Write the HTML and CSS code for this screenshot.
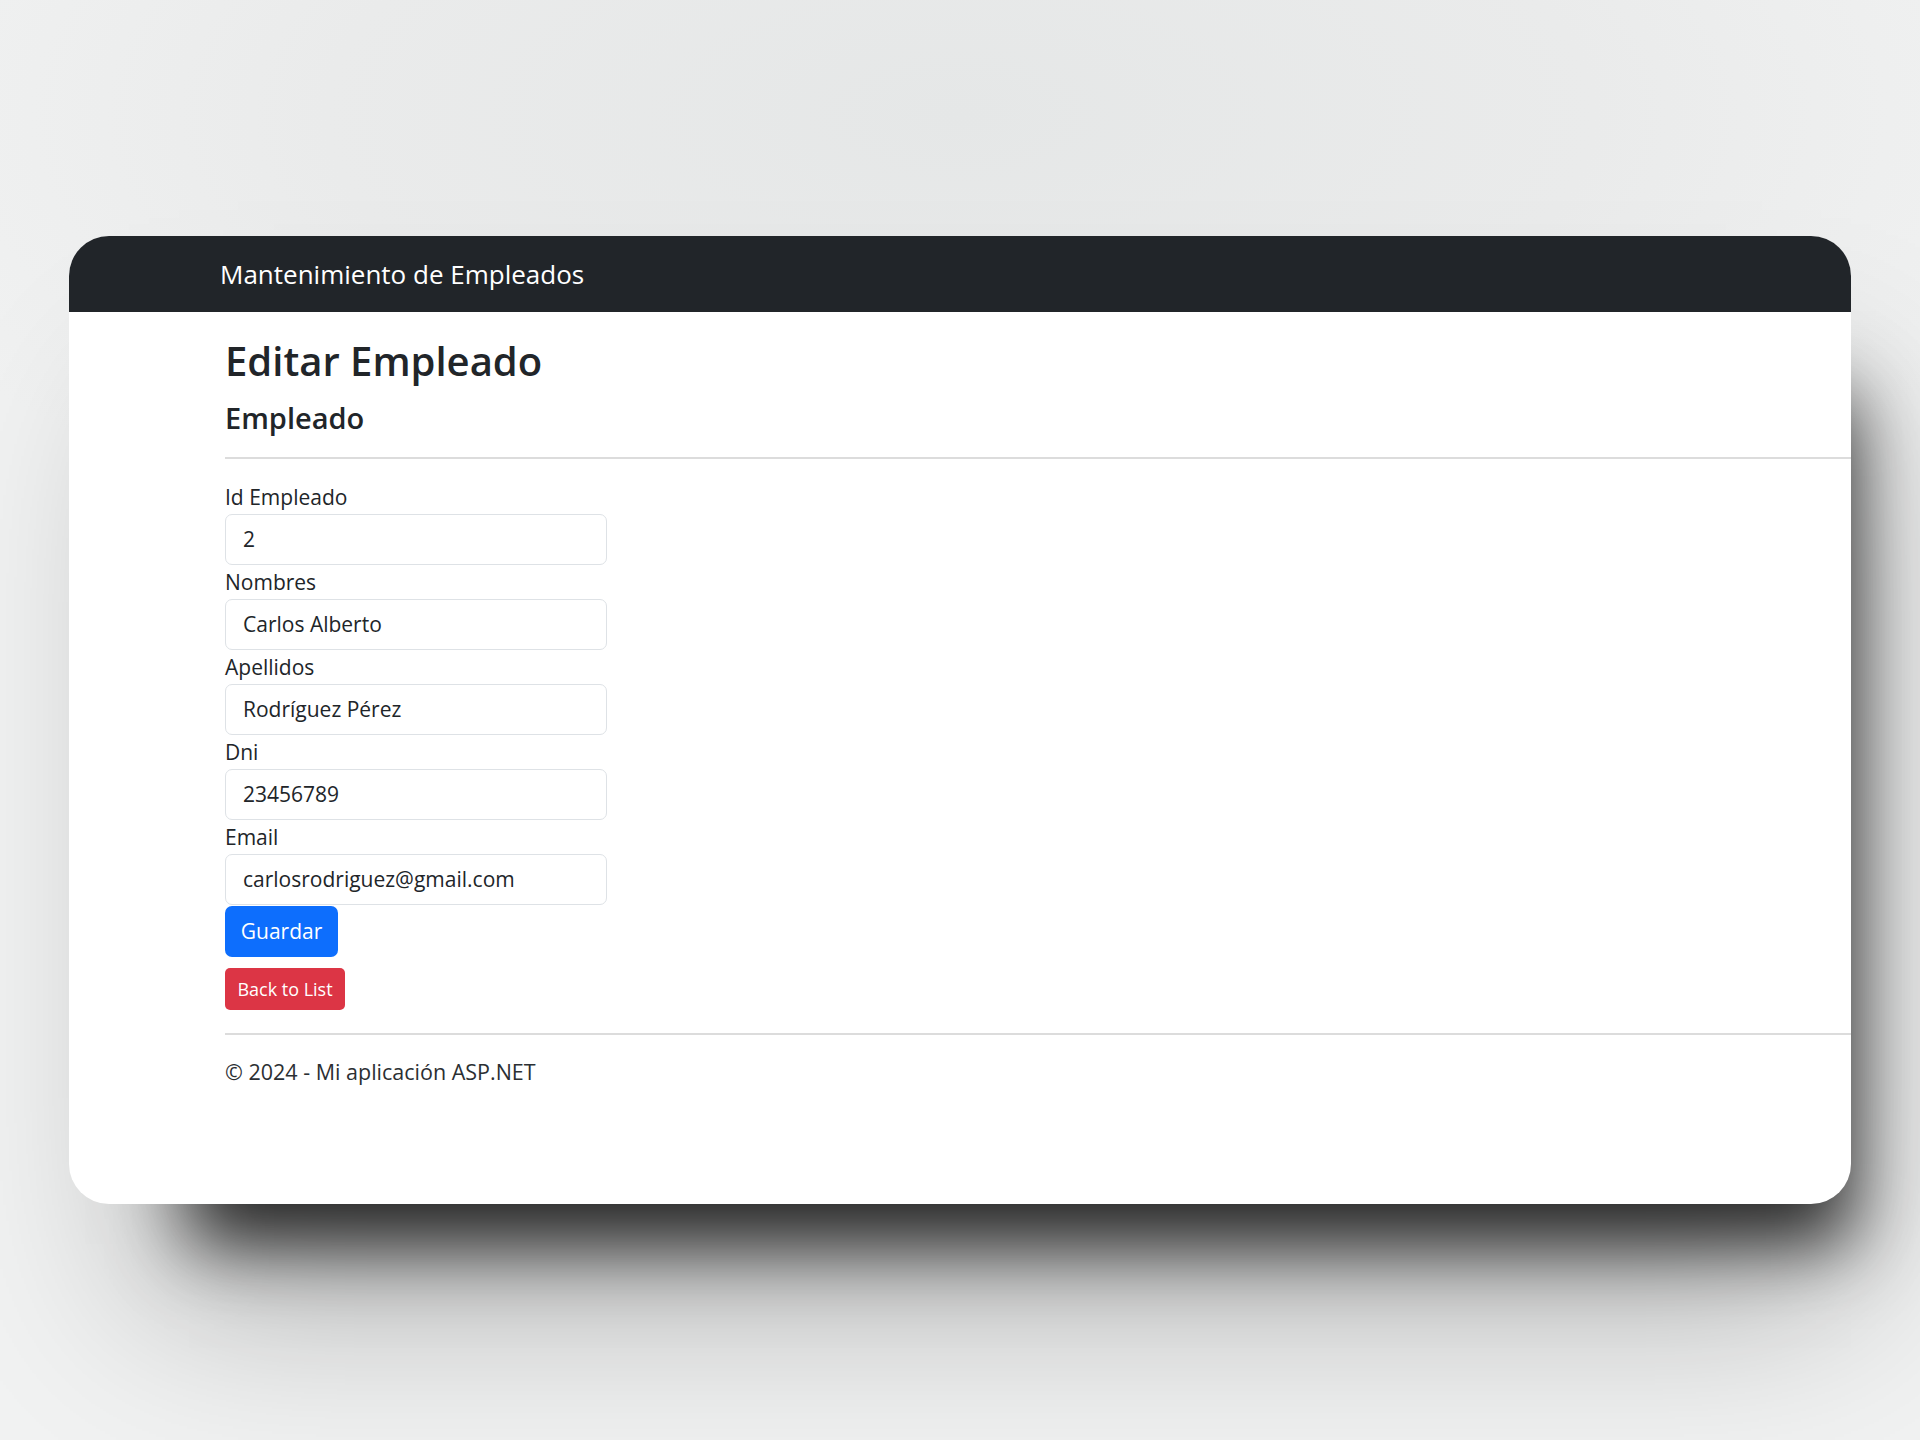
FILE: index.html
```html
<!DOCTYPE html>
<html lang="es">
<head>
    <meta charset="UTF-8">
    <meta name="viewport" content="width=device-width, initial-scale=1.0">
    <title>Editar Empleado</title>
    <link rel="stylesheet" href="styles.css">
</head>
<body>
    <div class="window">
        <nav class="navbar">
            <span class="brand">Mantenimiento de Empleados</span>
        </nav>

        <main class="content">
            <h1 class="title">Editar Empleado</h1>
            <h4 class="subtitle">Empleado</h4>
            <hr class="divider">

            <form class="edit-form">
                <label for="idEmpleado">Id Empleado</label>
                <input type="text" id="idEmpleado" value="2">

                <label for="nombres">Nombres</label>
                <input type="text" id="nombres" value="Carlos Alberto">

                <label for="apellidos">Apellidos</label>
                <input type="text" id="apellidos" value="Rodríguez Pérez">

                <label for="dni">Dni</label>
                <input type="text" id="dni" value="23456789">

                <label for="email">Email</label>
                <input type="text" id="email" value="carlosrodriguez@gmail.com">

                <button type="submit" class="btn btn-primary">Guardar</button>
            </form>

            <a href="#" class="btn btn-danger btn-sm">Back to List</a>

            <hr class="divider footer-line">
            <footer class="footer">&copy; 2024 - Mi aplicación ASP.NET</footer>
        </main>
    </div>
</body>
</html>
```

FILE: styles.css
```css
html, body {
    margin: 0;
    height: 100%;
}
body {
    font-family: 'Open Sans', 'Noto Sans', sans-serif;
    color: #212529;
    background: radial-gradient(ellipse 60% 35% at 50% 8%, #e5e7e7 0%, #eaebeb 55%, #f1f2f2 100%), #f4f5f5;
    background-color: #f4f5f5;
    padding: 236px 69px 0;
    box-sizing: border-box;
}
.window {
    height: 968px;
    background: #fff;
    border-radius: 40px;
    overflow: hidden;
    box-shadow: 60px 100px 70px -60px rgba(0, 0, 0, 0.8),
                40px 130px 180px -40px rgba(0, 0, 0, 0.3);
}
.navbar {
    height: 76px;
    background-color: #212529;
    display: flex;
    align-items: center;
    padding-left: 151px;
}
.brand {
    color: #fff;
    font-size: 26px;
}
.content {
    padding-left: 156px;
}
.title {
    font-size: 40px;
    font-weight: 600;
    line-height: 1.2;
    margin: 25px 0 0;
}
.subtitle {
    font-size: 29px;
    font-weight: 600;
    line-height: 1.2;
    margin: 16px 0 0;
}
.divider {
    border: none;
    border-top: 2px solid #dcdcdc;
    margin: 21px 0 0;
}
.edit-form {
    display: flex;
    flex-direction: column;
    align-items: flex-start;
    margin-top: 21px;
}
.edit-form label {
    font-size: 21px;
    line-height: 34px;
}
.edit-form input {
    box-sizing: border-box;
    width: 382px;
    height: 51px;
    padding: 0 17px;
    border: 1px solid #dee2e6;
    border-radius: 7px;
    font-family: inherit;
    font-size: 21px;
    color: #212529;
}
.btn {
    display: inline-flex;
    align-items: center;
    justify-content: center;
    box-sizing: border-box;
    border: none;
    color: #fff;
    text-decoration: none;
    font-family: inherit;
    cursor: pointer;
}
.btn-primary {
    height: 51px;
    width: 113px;
    margin-top: 1px;
    background-color: #0d6efd;
    border-radius: 7px;
    font-size: 21px;
}
.btn-danger {
    height: 42px;
    width: 120px;
    margin-top: 11px;
    background-color: #dc3545;
    border-radius: 5px;
}
.btn-sm {
    font-size: 18px;
}
.footer-line {
    margin-top: 23px;
}
.footer {
    font-size: 21.5px;
    line-height: 34px;
    margin-top: 20px;
    color: #2b2f33;
}
```
